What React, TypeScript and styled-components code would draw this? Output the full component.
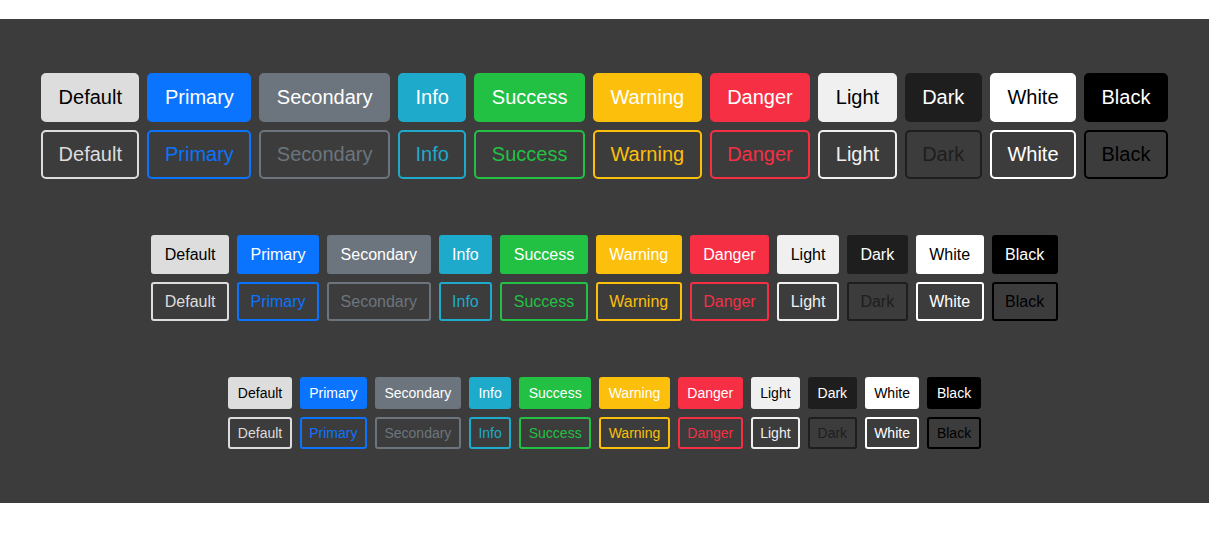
import React from "react";
import styled, { createGlobalStyle, css } from "styled-components";

type Size = "large" | "medium" | "small";

interface ITone {
  fill: string;
  text: string;
}

const TONES: Record<string, ITone> = {
  Default: { fill: "#dddddd", text: "#000000" },
  Primary: { fill: "#0a74ff", text: "#ffffff" },
  Secondary: { fill: "#6c757d", text: "#ffffff" },
  Info: { fill: "#1eaacb", text: "#ffffff" },
  Success: { fill: "#22c143", text: "#ffffff" },
  Warning: { fill: "#fcbf0b", text: "#ffffff" },
  Danger: { fill: "#f62f44", text: "#ffffff" },
  Light: { fill: "#f0f0f0", text: "#000000" },
  Dark: { fill: "#1e1e1e", text: "#ffffff" },
  White: { fill: "#ffffff", text: "#000000" },
  Black: { fill: "#000000", text: "#ffffff" },
};

const NAMES = Object.keys(TONES);
const SIZES: Size[] = ["large", "medium", "small"];

const sizeStyles = {
  large: css`
    font-size: 20px;
    line-height: 23px;
    height: 49px;
    padding: 0 15.5px;
    border-radius: 5px;
  `,
  medium: css`
    font-size: 16px;
    line-height: 18px;
    height: 39px;
    padding: 0 11.5px;
    border-radius: 3px;
  `,
  small: css`
    font-size: 14px;
    line-height: 16px;
    height: 32px;
    padding: 0 7.5px;
    border-radius: 3px;
  `,
};

export default function App() {
  return (
    <>
      <GlobalStyle />
      <Panel>
        {SIZES.map(size => (
          <Section key={size}>
            <Row>
              {NAMES.map(name => (
                <Button key={name} size={size} tone={TONES[name]} outline={false}>
                  {name}
                </Button>
              ))}
            </Row>
            <Row>
              {NAMES.map(name => (
                <Button key={name} size={size} tone={TONES[name]} outline>
                  {name}
                </Button>
              ))}
            </Row>
          </Section>
        ))}
      </Panel>
    </>
  );
}

const GlobalStyle = createGlobalStyle`
  body {
    margin: 0;
    background: #ffffff;
    font-family: "Liberation Sans", Arial, sans-serif;
  }
`;

const Panel = styled.div`
  margin-top: 19px;
  background-color: #3c3c3c;
  padding: 54px 0;
  display: flex;
  flex-direction: column;
  align-items: center;
  gap: 56px;
`;

const Section = styled.div`
  display: flex;
  flex-direction: column;
  gap: 8px;
`;

const Row = styled.div`
  display: flex;
  justify-content: center;
  gap: 8px;
`;

interface IButton {
  size: Size;
  tone: ITone;
  outline: boolean;
}

const Button = styled.button<IButton>`
  box-sizing: border-box;
  font-family: "Liberation Sans", Arial, sans-serif;
  ${props => sizeStyles[props.size]}
  border: 2px solid ${props => props.tone.fill};
  background-color: ${props => (props.outline ? "transparent" : props.tone.fill)};
  color: ${props => (props.outline ? props.tone.fill : props.tone.text)};
  cursor: pointer;
  white-space: nowrap;
`;
